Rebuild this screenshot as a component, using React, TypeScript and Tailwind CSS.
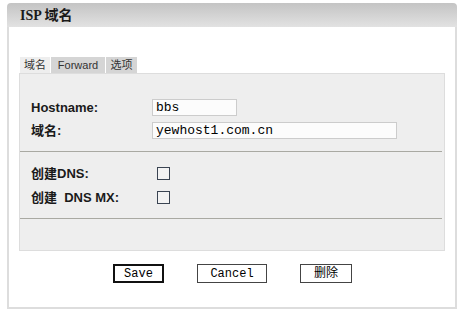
import React from 'react';

const cjk = '"Noto Sans CJK SC", sans-serif';

const Field = ({ label, value, width }: { label: string; value: string; width: string }) => (
  <div className="flex items-center h-[17px]">
    <div className="w-[121px] text-[13px] font-bold text-[#1a1a1a] font-['Liberation_Sans','Noto_Sans_CJK_SC',sans-serif]">
      {label}
    </div>
    <div
      className={`${width} h-[17px] border border-[#cccccc] bg-[#fcfcfc] pl-[3px] text-[13px] leading-[15px] text-black font-['Liberation_Mono',monospace]`}
    >
      {value}
    </div>
  </div>
);

const Check = ({ label }: { label: React.ReactNode }) => (
  <div className="flex items-center h-[13px]">
    <div className="w-[126px] text-[13px] font-bold text-[#1a1a1a] font-['Liberation_Sans','Noto_Sans_CJK_SC',sans-serif]">
      {label}
    </div>
    <div className="w-[13px] h-[13px] border border-[#3a4452] bg-[#f3f3f3]" />
  </div>
);

const App = () => {
  return (
    <div className="w-[461px] h-[315px] bg-white pt-[3px] pl-[7px]" style={{ fontFamily: cjk }}>
      <div className="w-[450px]">
        {/* Header */}
        <div className="h-[24px] rounded-t-[4px] bg-gradient-to-b from-[#c4c4c4] to-[#e2e2e2] pl-[13px] flex items-center">
          <span className="text-[14px] font-bold text-[#1a1a1a] font-['Liberation_Serif','Noto_Sans_CJK_SC',serif]">
            ISP 域名
          </span>
        </div>

        {/* Body */}
        <div className="h-[282px] border-x-2 border-b-2 border-[#dddddd] px-[10px] pt-[30px]">
          {/* Tabs */}
          <div className="flex h-[16px] pl-[1px] gap-[1px] text-[11px] text-[#333] font-['Liberation_Sans','Noto_Sans_CJK_SC',sans-serif]">
            <div className="w-[30px] bg-[#eeeeee] flex items-center justify-center">域名</div>
            <div className="w-[54px] bg-[#d5d5d5] flex items-center justify-center">Forward</div>
            <div className="w-[31px] bg-[#d5d5d5] flex items-center justify-center">选项</div>
          </div>

          {/* Panel */}
          <div className="h-[178px] border border-[#dddddd] bg-[#eeeeee]">
            <div className="pl-[11px] pt-[25px] flex flex-col gap-[6px]">
              <Field label="Hostname:" value="bbs" width="w-[85px]" />
              <Field label="域名:" value="yewhost1.com.cn" width="w-[245px]" />
            </div>
            <div className="mt-[12px] mr-[2px] h-px bg-[#a9a9a2]" />
            <div className="pl-[11px] pt-[15px] flex flex-col gap-[11px]">
              <Check label="创建DNS:" />
              <Check label={<>创建&nbsp;&nbsp;DNS MX:</>} />
            </div>
            <div className="mt-[14px] mr-[2px] h-px bg-[#a9a9a2]" />
          </div>

          {/* Buttons */}
          <div className="flex pl-[94px] pt-[13px] gap-[33px] text-[12px] font-['Liberation_Mono','Noto_Sans_CJK_SC',monospace]">
            <div className="w-[51px] h-[19px] border-2 border-[#111] bg-white flex items-center justify-center">Save</div>
            <div className="w-[70px] h-[19px] border border-[#444] bg-white flex items-center justify-center">Cancel</div>
            <div className="w-[52px] h-[19px] border border-[#444] bg-white flex items-center justify-center">删除</div>
          </div>
        </div>
      </div>
    </div>
  );
};

export default App;
